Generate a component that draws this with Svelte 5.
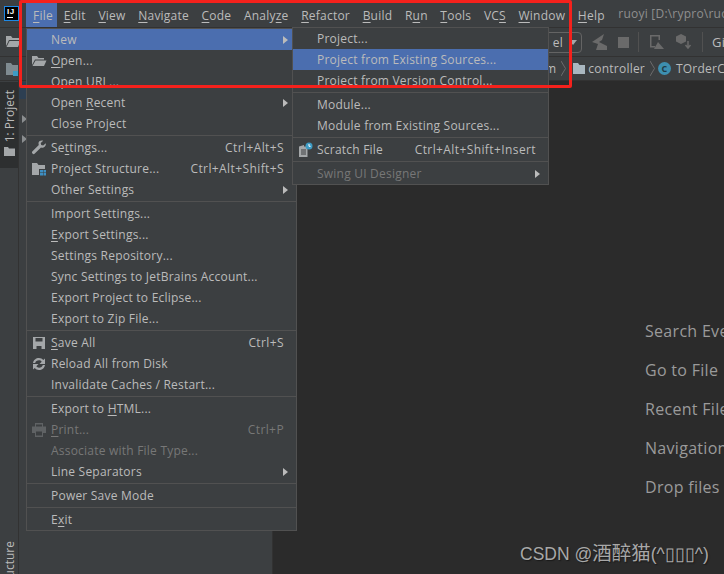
<script>
  const menubar = [
    ["File", 0], ["Edit", 0], ["View", 0], ["Navigate", 0], ["Code", 0], ["Analyze", 5],
    ["Refactor", 0], ["Build", 0], ["Run", 1], ["Tools", 0], ["VCS", 2], ["Window", 0], ["Help", 0]
  ];

  const fileMenu = [
    { label: "New", arrow: true, active: true },
    { label: "Open...", u: 0, icon: "open" },
    { label: "Open URL..." },
    { label: "Open Recent", u: 5, arrow: true },
    { label: "Close Project" },
    { sep: true },
    { label: "Settings...", u: 2, key: "Ctrl+Alt+S", icon: "wrench" },
    { label: "Project Structure...", key: "Ctrl+Alt+Shift+S", icon: "structure" },
    { label: "Other Settings", arrow: true },
    { sep: true },
    { label: "Import Settings..." },
    { label: "Export Settings...", u: 0 },
    { label: "Settings Repository..." },
    { label: "Sync Settings to JetBrains Account..." },
    { label: "Export Project to Eclipse..." },
    { label: "Export to Zip File..." },
    { sep: true },
    { label: "Save All", u: 0, key: "Ctrl+S", icon: "save" },
    { label: "Reload All from Disk", icon: "reload" },
    { label: "Invalidate Caches / Restart..." },
    { sep: true },
    { label: "Export to HTML...", u: 10 },
    { label: "Print...", u: 0, key: "Ctrl+P", icon: "print", off: true },
    { label: "Associate with File Type...", off: true },
    { label: "Line Separators", arrow: true },
    { sep: true },
    { label: "Power Save Mode" },
    { sep: true },
    { label: "Exit", u: 1 }
  ];

  const newMenu = [
    { label: "Project..." },
    { label: "Project from Existing Sources...", active: true },
    { label: "Project from Version Control..." },
    { sep: true },
    { label: "Module..." },
    { label: "Module from Existing Sources..." },
    { sep: true },
    { label: "Scratch File", key: "Ctrl+Alt+Shift+Insert", icon: "scratch" },
    { sep: true },
    { label: "Swing UI Designer", arrow: true, off: true }
  ];

  const hints = ["Search Everywhere", "Go to File", "Recent Files", "Navigation Bar", "Drop files here"];
</script>

{#snippet mnemonic(text, u)}
  {#if u === undefined}{text}{:else}{text.slice(0, u)}<u>{text[u]}</u>{text.slice(u + 1)}{/if}
{/snippet}

{#snippet icon(name)}
  <svg class="icon" width="16" height="16" viewBox="0 0 16 16">
    {#if name === "open"}
      <path d="M1 3h5l1.500 2H13v1.500H4L1 12z" fill="#a4a7a9" />
      <path d="M4.500 7.500H15.500L13 13H1.500z" fill="#a4a7a9" />
    {:else if name === "wrench"}
      <path d="M14.800 3.200l-2.600 2.400-2-.6-.5-2 2.500-2.300C9.800.1 8 1 7.600 2.600c-.2.900-.1 1.700.2 2.400L1.500 11.300c-.7.700-.7 1.700 0 2.300.7.700 1.600.7 2.300 0L10 7.400c.8.300 1.700.3 2.500 0 1.700-.6 2.700-2.300 2.300-4.200z" fill="#a4a7a9" />
    {:else if name === "structure"}
      <path d="M1 2h5l1.500 2H14v4H8v6H1z" fill="#a4a7a9" />
      <path d="M9 9h3v2.500H9zM12.500 9H15v2.500h-2.500zM9 12h3v2.500H9zM12.500 12H15v2.500h-2.500z" fill="#3d8fc4" />
    {:else if name === "save"}
      <path fill-rule="evenodd" d="M2 2h12v12H2zM4.500 3v3.500h7V3zM5.500 11v3h5v-3z" fill="#a4a7a9" />
    {:else if name === "reload"}
      <path d="M2 7c.4-3 3-5 6-5 1.800 0 3.300.8 4.300 2L14 2.500V8H8.500l2.200-2.300C10 4.800 9.100 4.300 8 4.300 6 4.300 4.600 5.400 4.200 7z" fill="#a4a7a9" />
      <path d="M14 9c-.4 3-3 5-6 5-1.800 0-3.300-.8-4.300-2L2 13.500V8h5.500l-2.200 2.300c.7.900 1.600 1.400 2.700 1.400 2 0 3.400-1.100 3.800-2.700z" fill="#a4a7a9" />
    {:else if name === "print"}
      <path fill-rule="evenodd" d="M4 1h8v3.500h3v6.500h-3v4H4v-4H1V4.500h3zM5 2.500v2h6v-2zM5 9.500v4h6v-4z" fill="#5f6264" />
    {:else if name === "scratch"}
      <path d="M2 4.500L7 3v1.500h3.500V15H2z" fill="#a4a7a9" />
      <path d="M4 8h5M4 10h5M4 12h5" stroke="#3c3f41" stroke-width="1" />
      <circle cx="12" cy="4" r="3.500" fill="#3d9bc4" />
      <path d="M12 2v2.300h1.600" stroke="#fff" stroke-width="1" fill="none" />
    {/if}
  </svg>
{/snippet}

{#snippet menu(items, cls)}
  <div class="menu {cls}">
    {#each items as item}
      {#if item.sep}
        <div class="sep"></div>
      {:else}
        <div class="row" class:active={item.active} class:off={item.off}>
          <span class="slot">{#if item.icon}{@render icon(item.icon)}{/if}</span>
          <span class="label">{@render mnemonic(item.label, item.u)}</span>
          {#if item.key}<span class="key">{item.key}</span>{/if}
          {#if item.arrow}<span class="arrow"></span>{/if}
        </div>
      {/if}
    {/each}
  </div>
{/snippet}

<div class="app">
  <header class="menubar">
    <div class="logo"><span>IJ</span><i></i></div>
    <nav class="items">
      {#each menubar as [name, u], i}
        <span class="item" class:open={i === 0}>{@render mnemonic(name, u)}</span>
      {/each}
    </nav>
    <span class="title">ruoyi [D:\rypro\ruo</span>
  </header>

  <div class="toolbar">
    <svg class="bar-folder" width="16" height="14" viewBox="0 0 16 14">
      <path d="M1 1h5l1.500 2H14v2H4L1 11z" fill="#a4a7a9" />
      <path d="M4.500 6H15.500L13 12H1.500z" fill="#a4a7a9" />
    </svg>
    <div class="spacer"></div>
    <div class="select"><span>el</span><i></i></div>
    <svg class="tool" width="18" height="18" viewBox="0 0 18 18">
      <path d="M1 9L13 1l-2 6-3 2 8 4v4H5l2-6z" fill="#6a6a6a" />
    </svg>
    <div class="stop"></div>
    <div class="divider"></div>
    <svg class="tool" width="18" height="18" viewBox="0 0 18 18">
      <path d="M2 2h10v5h-1.500V3.500h-7V13H7v1.500H2z" fill="#6a6a6a" />
      <path d="M6 16l4-7 6 7z" fill="#6a6a6a" />
    </svg>
    <svg class="tool" width="18" height="18" viewBox="0 0 18 18">
      <path d="M6 1l5 2.500v5L6 11 1 8.500v-5z" fill="#6a6a6a" />
      <path d="M13 8v6M10.500 12l2.500 3 2.500-3" stroke="#6a6a6a" stroke-width="1.500" fill="none" />
    </svg>
    <div class="divider"></div>
    <span class="git">Git:</span>
  </div>

  <div class="crumbs">
    <svg class="bar-folder" width="14" height="14" viewBox="0 0 14 14">
      <path d="M1 1h5l1.500 2H13v10H1z" fill="#7f8b91" />
      <path d="M8 9h5v5H8z" fill="#3d9bc4" />
    </svg>
    <div class="crumb-gap"></div>
    <span>m</span>
    <svg class="chev" width="5" height="15" viewBox="0 0 5 15"><path d="M0 0l4.500 7.500L0 15" stroke="#6b6b6b" fill="none" /></svg>
    <svg width="12" height="11" viewBox="0 0 12 11"><path d="M0 0h5l1.500 2H12v9H0z" fill="#a9b7c0" /></svg>
    <span>controller</span>
    <svg class="chev" width="5" height="15" viewBox="0 0 5 15"><path d="M0 0l4.500 7.500L0 15" stroke="#6b6b6b" fill="none" /></svg>
    <span class="cls">C</span>
    <span>TOrderController</span>
  </div>

  <main class="main">
    <aside class="strip">
      <div class="tab">
        <span class="vert">1: Project</span>
        <svg width="11" height="9" viewBox="0 0 11 9"><path d="M0 0h4l1 1.500h6V9H0z" fill="#a4a7a9" /></svg>
      </div>
      <div class="grow"></div>
      <span class="vert bottom">Z: Structure</span>
    </aside>
    <section class="panel">
      <div class="selected"></div>
      <div class="tri"></div>
      <div class="tri second"></div>
    </section>
    <section class="editor">
      {#each hints as hint}
        <p>{hint}</p>
      {/each}
    </section>
  </main>

  {@render menu(fileMenu, "file")}
  {@render menu(newMenu, "new")}

  <div class="redbox"></div>
  <div class="mark">CSDN @<span class="cjk">酒醉猫</span>(^<span class="tofu">▯▯▯</span>^)</div>
</div>

<style>
  :global(body) {
    margin: 0;
    background: #2b2b2b;
  }
  .app {
    position: relative;
    width: 724px;
    height: 574px;
    overflow: hidden;
    display: flex;
    flex-direction: column;
    background: #3c3f41;
    color: #bbbbbb;
    font-family: "Open Sans", "Noto Sans", sans-serif;
    font-size: 12px;
    letter-spacing: 0.22px;
  }
  u {
    text-underline-offset: 2px;
  }
  .menubar {
    height: 28px;
    flex: none;
    display: flex;
    align-items: flex-end;
    border-bottom: 1px solid #323232;
    box-sizing: border-box;
    white-space: nowrap;
    overflow: hidden;
  }
  .logo {
    position: relative;
    width: 15px;
    height: 15px;
    margin: 0 0 6px 4px;
    background: #000;
    border: 1px solid #1e88e5;
    box-sizing: border-box;
    color: #fff;
    font: bold 8px/9px "Liberation Sans", sans-serif;
    letter-spacing: 0.5px;
    padding-left: 2px;
    flex: none;
  }
  .logo i {
    display: block;
    width: 6px;
    height: 1px;
    margin-top: 1px;
    background: #fff;
  }
  .items {
    display: flex;
    margin-left: 7px;
    height: 26px;
  }
  .item {
    padding: 0 6px;
    margin-right: 0.65px;
    line-height: 29px;
  }
  .item.open {
    width: 31px;
    box-sizing: border-box;
    background: #4b6eaf;
    padding: 0 7px;
  }
  .title {
    margin-left: 7px;
    color: #8f8f8f;
    line-height: 28px;
    align-self: flex-start;
  }
  .toolbar {
    height: 29px;
    flex: none;
    display: flex;
    align-items: center;
    gap: 9px;
    border-bottom: 1px solid #323232;
    box-sizing: border-box;
    white-space: nowrap;
    overflow: hidden;
  }
  .bar-folder {
    margin-left: 5px;
    flex: none;
  }
  .spacer {
    flex: 1;
  }
  .select {
    width: 60px;
    height: 21px;
    flex: none;
    box-sizing: border-box;
    border: 1px solid #646464;
    border-radius: 4px;
    display: flex;
    align-items: center;
    justify-content: flex-end;
    gap: 6px;
    padding-right: 4px;
  }
  .select i {
    border: 4px solid transparent;
    border-top: 5px solid #a4a7a9;
    border-bottom: 0;
  }
  .tool {
    flex: none;
  }
  .stop {
    width: 11px;
    height: 11px;
    background: #6a6a6a;
    flex: none;
  }
  .divider {
    width: 1px;
    height: 20px;
    background: #515151;
    flex: none;
  }
  .git {
    flex: none;
    width: 12px;
    overflow: hidden;
    font-size: 13px;
  }
  .crumbs {
    height: 24px;
    flex: none;
    display: flex;
    align-items: center;
    gap: 3px;
    border-bottom: 1px solid #323232;
    box-sizing: border-box;
    white-space: nowrap;
    overflow: hidden;
  }
  .crumb-gap {
    width: 520px;
    flex: none;
  }
  .chev {
    flex: none;
    margin: 0 4px 0 2px;
  }
  .chev + svg {
    flex: none;
  }
  .cls {
    width: 13px;
    height: 13px;
    flex: none;
    margin: 0 2px 0 -4px;
    border-radius: 50%;
    background: #3d8fb0;
    color: #1f3a45;
    font-size: 9px;
    font-weight: 700;
    line-height: 13px;
    text-align: center;
  }
  .main {
    flex: 1;
    min-height: 0;
    display: flex;
  }
  .strip {
    width: 19px;
    flex: none;
    box-sizing: border-box;
    border-right: 1px solid #323232;
    display: flex;
    flex-direction: column;
    overflow: hidden;
  }
  .tab {
    height: 86px;
    margin-top: 1px;
    background: #2d2f30;
    display: flex;
    flex-direction: column;
    align-items: center;
    justify-content: flex-end;
    gap: 5px;
    padding-bottom: 12px;
    box-sizing: border-box;
  }
  .vert {
    writing-mode: vertical-rl;
    transform: rotate(180deg);
    white-space: nowrap;
    letter-spacing: 0;
  }
  .grow {
    flex: 1;
  }
  .bottom {
    align-self: center;
    margin-bottom: -32px;
  }
  .panel {
    width: 254px;
    flex: none;
    box-sizing: border-box;
    border-right: 1px solid #323232;
  }
  .selected {
    height: 17px;
    margin-top: 1px;
    background: #2d3f52;
  }
  .tri {
    width: 0;
    margin: 16px 0 0 3px;
    border-left: 5px solid #8a8d8f;
    border-top: 4px solid transparent;
    border-bottom: 4px solid transparent;
  }
  .tri.second {
    margin-top: 12px;
  }
  .editor {
    flex: 1;
    background: #2b2b2b;
    padding: 239px 0 0 372px;
    overflow: hidden;
    white-space: nowrap;
  }
  .editor p {
    margin: 0 0 16px;
    height: 23px;
    line-height: 23px;
    font-size: 16px;
    letter-spacing: 0.3px;
    color: #9a9a9a;
  }
  .menu {
    position: absolute;
    background: #3c3f41;
    border: 1px solid #515151;
    box-sizing: border-box;
  }
  .menu.file {
    left: 26px;
    top: 28px;
    width: 271px;
  }
  .menu.new {
    left: 292px;
    top: 27px;
    width: 257px;
  }
  .row {
    height: 21px;
    display: flex;
    align-items: center;
    padding-right: 12px;
    white-space: nowrap;
  }
  .row.active {
    background: #4b6eaf;
  }
  .row.off {
    color: #777777;
  }
  .slot {
    width: 24px;
    flex: none;
    display: flex;
    justify-content: center;
  }
  .label {
    flex: 1;
  }
  .key {
    letter-spacing: 0.4px;
  }
  .arrow {
    border-left: 5px solid #bbbbbb;
    border-top: 4px solid transparent;
    border-bottom: 4px solid transparent;
  }
  .row:has(.arrow) {
    padding-right: 8px;
  }
  .sep {
    height: 1px;
    margin: 1px 0;
    background: #515151;
  }
  .redbox {
    position: absolute;
    left: 19px;
    top: 0;
    width: 553px;
    height: 88px;
    border: 3px solid #f5211c;
    border-radius: 2px;
    box-sizing: border-box;
    pointer-events: none;
  }
  .mark {
    position: absolute;
    left: 520px;
    top: 537px;
    font: 17.500px "Liberation Sans", "Noto Sans CJK SC", sans-serif;
    letter-spacing: 0;
    color: #a8a8a8;
    text-shadow: 1px 1px 1px #1a1a1a;
    white-space: nowrap;
  }
  .cjk {
    font-size: 19.500px;
  }
</style>
